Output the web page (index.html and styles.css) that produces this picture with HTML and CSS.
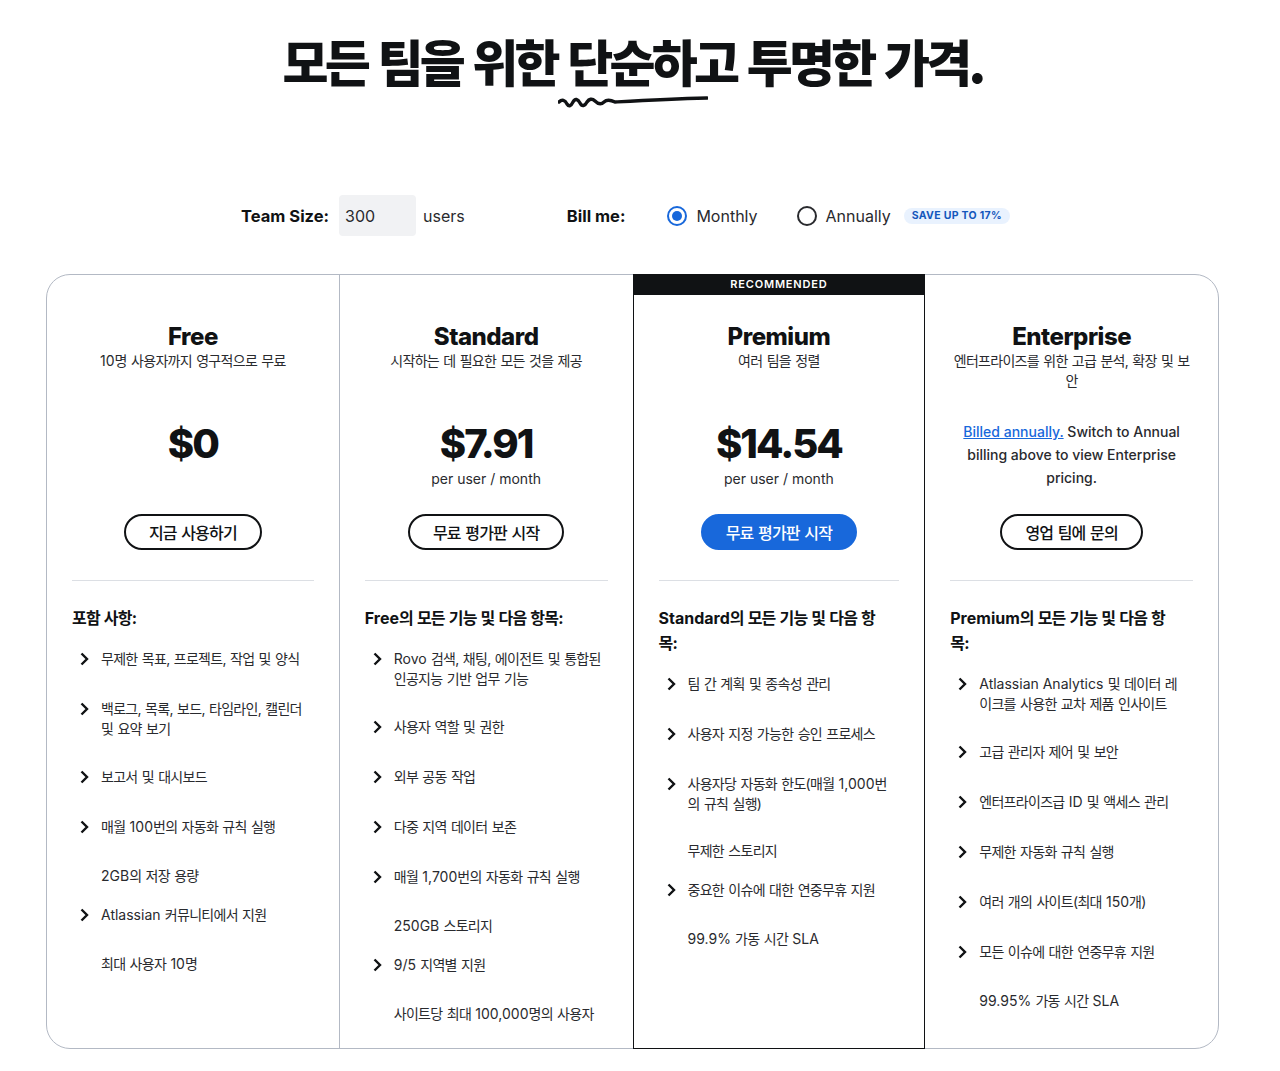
FILE: index.html
```html
<!DOCTYPE html>
<html lang="ko">
<head>
<meta charset="utf-8">
<title>Pricing</title>
<link rel="stylesheet" href="styles.css">
</head>
<body>
<div class="page">
  <header class="hero">
    <h1 class="hero-title">모든 팀을 위한 단순하고 투명한 가격.</h1>
    <div class="squiggle-row">
      <svg class="squiggle" width="150" height="16" viewBox="0 0 150 16" aria-hidden="true">
        <path d="M1 8 C4 5 7 6 9 10 C11 13 13 12 15 8 C17 4 20 5 22 9 C24 13 27 12 29 8 C31 5 34 4 37 7 C40 10 43 11 46 8 C49 5 53 6 57 8 C75 7 110 5 149 4" fill="none" stroke="currentColor" stroke-width="3.4" stroke-linecap="round" stroke-linejoin="round"/>
      </svg>
    </div>
  </header>

  <section class="controls">
    <div class="ctl-group">
      <span class="ctl-label">Team Size:</span>
      <span class="size-input">300</span>
      <span class="ctl-text">users</span>
    </div>
    <div class="ctl-group">
      <span class="ctl-label bill-label">Bill me:</span>
      <span class="radio radio-first"><span class="dot dot-on"></span>Monthly</span>
      <span class="radio"><span class="dot"></span>Annually</span>
      <span class="save">SAVE UP TO 17%</span>
    </div>
  </section>

  <section class="plans">
    <div class="plan plan-free">
      <div class="plan-flag"></div>
      <h2 class="plan-name">Free</h2>
      <p class="plan-desc ko"><span class="en">10</span>명 사용자까지 영구적으로 무료</p>
      <div class="plan-price">
        <div class="price">$0</div>
      </div>
      <span class="plan-btn ko">지금 사용하기</span>
      <hr class="plan-rule">
      <h3 class="feat-head ko">포함 사항:</h3>
      <ul class="feat-list ko">
        <li class="feat arrow"><svg class="chev" viewBox="0 0 24 24"><path d="M9.5 6.5 15 12l-5.5 5.5"/></svg><span class="feat-text">무제한 목표, 프로젝트, 작업 및 양식</span></li>
        <li class="feat arrow"><svg class="chev" viewBox="0 0 24 24"><path d="M9.5 6.5 15 12l-5.5 5.5"/></svg><span class="feat-text">백로그, 목록, 보드, 타임라인, 캘린더<br>및 요약 보기</span></li>
        <li class="feat arrow"><svg class="chev" viewBox="0 0 24 24"><path d="M9.5 6.5 15 12l-5.5 5.5"/></svg><span class="feat-text">보고서 및 대시보드</span></li>
        <li class="feat arrow"><svg class="chev" viewBox="0 0 24 24"><path d="M9.5 6.5 15 12l-5.5 5.5"/></svg><span class="feat-text">매월 <span class="en">100</span>번의 자동화 규칙 실행</span></li>
        <li class="feat"><span></span><span class="feat-text"><span class="en">2GB</span>의 저장 용량</span></li>
        <li class="feat arrow"><svg class="chev" viewBox="0 0 24 24"><path d="M9.5 6.5 15 12l-5.5 5.5"/></svg><span class="feat-text"><span class="en">Atlassian</span> 커뮤니티에서 지원</span></li>
        <li class="feat"><span></span><span class="feat-text">최대 사용자 <span class="en">10</span>명</span></li>
      </ul>
    </div>

    <div class="plan plan-standard">
      <div class="plan-flag"></div>
      <h2 class="plan-name">Standard</h2>
      <p class="plan-desc ko">시작하는 데 필요한 모든 것을 제공</p>
      <div class="plan-price">
        <div class="price">$7.91</div>
        <div class="per">per user / month</div>
      </div>
      <span class="plan-btn ko">무료 평가판 시작</span>
      <hr class="plan-rule">
      <h3 class="feat-head ko"><span class="en">Free</span>의 모든 기능 및 다음 항목:</h3>
      <ul class="feat-list ko">
        <li class="feat arrow"><svg class="chev" viewBox="0 0 24 24"><path d="M9.5 6.5 15 12l-5.5 5.5"/></svg><span class="feat-text"><span class="en">Rovo</span> 검색, 채팅, 에이전트 및 통합된<br>인공지능 기반 업무 기능</span></li>
        <li class="feat arrow"><svg class="chev" viewBox="0 0 24 24"><path d="M9.5 6.5 15 12l-5.5 5.5"/></svg><span class="feat-text">사용자 역할 및 권한</span></li>
        <li class="feat arrow"><svg class="chev" viewBox="0 0 24 24"><path d="M9.5 6.5 15 12l-5.5 5.5"/></svg><span class="feat-text">외부 공동 작업</span></li>
        <li class="feat arrow"><svg class="chev" viewBox="0 0 24 24"><path d="M9.5 6.5 15 12l-5.5 5.5"/></svg><span class="feat-text">다중 지역 데이터 보존</span></li>
        <li class="feat arrow"><svg class="chev" viewBox="0 0 24 24"><path d="M9.5 6.5 15 12l-5.5 5.5"/></svg><span class="feat-text">매월 <span class="en">1,700</span>번의 자동화 규칙 실행</span></li>
        <li class="feat"><span></span><span class="feat-text"><span class="en">250GB</span> 스토리지</span></li>
        <li class="feat arrow"><svg class="chev" viewBox="0 0 24 24"><path d="M9.5 6.5 15 12l-5.5 5.5"/></svg><span class="feat-text"><span class="en">9/5</span> 지역별 지원</span></li>
        <li class="feat"><span></span><span class="feat-text">사이트당 최대 <span class="en">100,000</span>명의 사용자</span></li>
      </ul>
    </div>

    <div class="plan plan-premium">
      <div class="plan-flag flag-on">RECOMMENDED</div>
      <h2 class="plan-name">Premium</h2>
      <p class="plan-desc ko">여러 팀을 정렬</p>
      <div class="plan-price">
        <div class="price">$14.54</div>
        <div class="per">per user / month</div>
      </div>
      <span class="plan-btn plan-btn-primary ko">무료 평가판 시작</span>
      <hr class="plan-rule">
      <h3 class="feat-head ko"><span class="en">Standard</span>의 모든 기능 및 다음 항<br>목:</h3>
      <ul class="feat-list ko">
        <li class="feat arrow"><svg class="chev" viewBox="0 0 24 24"><path d="M9.5 6.5 15 12l-5.5 5.5"/></svg><span class="feat-text">팀 간 계획 및 종속성 관리</span></li>
        <li class="feat arrow"><svg class="chev" viewBox="0 0 24 24"><path d="M9.5 6.5 15 12l-5.5 5.5"/></svg><span class="feat-text">사용자 지정 가능한 승인 프로세스</span></li>
        <li class="feat arrow"><svg class="chev" viewBox="0 0 24 24"><path d="M9.5 6.5 15 12l-5.5 5.5"/></svg><span class="feat-text">사용자당 자동화 한도(매월 <span class="en">1,000</span>번<br>의 규칙 실행)</span></li>
        <li class="feat"><span></span><span class="feat-text">무제한 스토리지</span></li>
        <li class="feat arrow"><svg class="chev" viewBox="0 0 24 24"><path d="M9.5 6.5 15 12l-5.5 5.5"/></svg><span class="feat-text">중요한 이슈에 대한 연중무휴 지원</span></li>
        <li class="feat"><span></span><span class="feat-text"><span class="en">99.9%</span> 가동 시간 <span class="en">SLA</span></span></li>
      </ul>
    </div>

    <div class="plan plan-enterprise">
      <div class="plan-flag"></div>
      <h2 class="plan-name">Enterprise</h2>
      <p class="plan-desc ko">엔터프라이즈를 위한 고급 분석, 확장 및 보<br>안</p>
      <div class="plan-price">
        <p class="ent-note"><a class="ent-link" href="#">Billed annually.</a> Switch to Annual<br>billing above to view Enterprise<br>pricing.</p>
      </div>
      <span class="plan-btn ko">영업 팀에 문의</span>
      <hr class="plan-rule">
      <h3 class="feat-head ko"><span class="en">Premium</span>의 모든 기능 및 다음 항<br>목:</h3>
      <ul class="feat-list ko">
        <li class="feat arrow"><svg class="chev" viewBox="0 0 24 24"><path d="M9.5 6.5 15 12l-5.5 5.5"/></svg><span class="feat-text"><span class="en">Atlassian Analytics</span> 및 데이터 레<br>이크를 사용한 교차 제품 인사이트</span></li>
        <li class="feat arrow"><svg class="chev" viewBox="0 0 24 24"><path d="M9.5 6.5 15 12l-5.5 5.5"/></svg><span class="feat-text">고급 관리자 제어 및 보안</span></li>
        <li class="feat arrow"><svg class="chev" viewBox="0 0 24 24"><path d="M9.5 6.5 15 12l-5.5 5.5"/></svg><span class="feat-text">엔터프라이즈급 <span class="en">ID</span> 및 액세스 관리</span></li>
        <li class="feat arrow"><svg class="chev" viewBox="0 0 24 24"><path d="M9.5 6.5 15 12l-5.5 5.5"/></svg><span class="feat-text">무제한 자동화 규칙 실행</span></li>
        <li class="feat arrow"><svg class="chev" viewBox="0 0 24 24"><path d="M9.5 6.5 15 12l-5.5 5.5"/></svg><span class="feat-text">여러 개의 사이트(최대 <span class="en">150</span>개)</span></li>
        <li class="feat arrow"><svg class="chev" viewBox="0 0 24 24"><path d="M9.5 6.5 15 12l-5.5 5.5"/></svg><span class="feat-text">모든 이슈에 대한 연중무휴 지원</span></li>
        <li class="feat"><span></span><span class="feat-text"><span class="en">99.95%</span> 가동 시간 <span class="en">SLA</span></span></li>
      </ul>
    </div>
  </section>
</div>
</body>
</html>
```

FILE: styles.css
```css
html, body {
  margin: 0;
  padding: 0;
  background: #ffffff;
}

body {
  color: #101214;
  font-family: "Inter", "Noto Sans CJK KR", sans-serif;
}

.page {
  width: 1265px;
  padding-bottom: 23px;
}

/* ---------- hero ---------- */
.hero {
  padding-top: 30px;
  text-align: center;
}

.hero-title {
  margin: 0;
  font-family: "Noto Sans CJK KR", sans-serif;
  font-weight: 900;
  font-size: 50px;
  line-height: 60px;
  letter-spacing: -0.074em;
  color: #101214;
}

.squiggle-row {
  display: flex;
  justify-content: center;
  margin-top: 4px;
  color: #101214;
}

.squiggle {
  display: block;
}

/* ---------- controls ---------- */
.controls {
  display: flex;
  justify-content: center;
  align-items: center;
  gap: 102px;
  margin-top: 85px;
  padding-right: 14px;
  font-size: 16px;
}

.ctl-group {
  display: flex;
  align-items: center;
}

.ctl-label {
  font-weight: 700;
  font-size: 16.5px;
  margin-right: 10px;
}

.bill-label {
  margin-right: 42px;
}

.size-input {
  display: flex;
  align-items: center;
  box-sizing: border-box;
  width: 77px;
  height: 41px;
  padding-left: 6px;
  margin-right: 7px;
  background: #f1f2f4;
  border-radius: 4px;
  color: #292a2e;
}

.ctl-text {
  color: #292a2e;
}

.radio {
  display: flex;
  align-items: center;
  gap: 9px;
  color: #292a2e;
  margin-right: 13px;
}

.radio-first {
  margin-right: 39px;
}

.dot {
  display: flex;
  align-items: center;
  justify-content: center;
  box-sizing: border-box;
  width: 20px;
  height: 20px;
  border: 2px solid #292a2e;
  border-radius: 50%;
}

.dot-on {
  border-color: #1868db;
}

.dot-on::after {
  content: "";
  width: 10px;
  height: 10px;
  border-radius: 50%;
  background: #1868db;
}

.save {
  height: 16px;
  line-height: 16px;
  padding: 0 8px;
  border-radius: 8px;
  background: #e9f2fe;
  color: #1558bc;
  font-size: 10.5px;
  font-weight: 700;
  letter-spacing: 0.3px;
}

/* ---------- plans ---------- */
.plans {
  display: grid;
  grid-template-columns: repeat(4, 1fr);
  box-sizing: border-box;
  width: 1173px;
  margin: 38px auto 0;
  border: 1px solid #b3b9c4;
  border-radius: 24px;
}

.plan {
  display: flex;
  flex-direction: column;
  padding: 0 25px 21px;
  min-width: 0;
}

.plan-free {
  border-right: 1px solid #b3b9c4;
}

.plan-premium {
  margin: -1px 0;
  border: 1px solid #101214;
  border-top: 0;
}

.plan-flag {
  height: 20px;
  margin: 0 -25px;
}

.flag-on {
  height: 21px;
  background: #101214;
  color: #ffffff;
  font-size: 11px;
  line-height: 21px;
  font-weight: 600;
  letter-spacing: 0.8px;
  text-align: center;
}

.plan-name {
  margin: 28px 0 0;
  font-size: 24px;
  line-height: 28px;
  font-weight: 800;
  letter-spacing: -0.5px;
  text-align: center;
}

.plan-desc {
  margin: 0;
  min-height: 40px;
  font-size: 14px;
  line-height: 20px;
  text-align: center;
  color: #292a2e;
  white-space: nowrap;
}

.plan-price {
  height: 70px;
  margin-top: 28px;
  text-align: center;
}

.price {
  font-size: 40px;
  line-height: 50px;
  font-weight: 800;
  letter-spacing: -2px;
}

.per {
  font-size: 14px;
  line-height: 20px;
  color: #292a2e;
}

.ent-note {
  margin: 0;
  padding-top: 1px;
  font-size: 14px;
  line-height: 23px;
  font-weight: 500;
  color: #292a2e;
}

.ent-link {
  color: #1868db;
  text-decoration: underline;
}

.plan-btn {
  align-self: center;
  display: flex;
  align-items: center;
  box-sizing: border-box;
  height: 36px;
  margin-top: 25px;
  padding: 0 23px;
  border: 2px solid #101214;
  border-radius: 18px;
  background: #ffffff;
  color: #101214;
  font-size: 16px;
  font-weight: 500;
  white-space: nowrap;
}

.plan-btn-primary {
  background: #1868db;
  border-color: #1868db;
  color: #ffffff;
}

.plan-rule {
  margin: 30px 0 0;
  border: 0;
  border-top: 1px solid #dcdfe4;
}

.feat-head {
  margin: 25px 0 0;
  font-size: 16px;
  line-height: 25px;
  font-weight: 700;
  white-space: nowrap;
}

.feat-list {
  list-style: none;
  margin: 16px 0 0;
  padding: 0;
  font-size: 14px;
  color: #292a2e;
}

.feat {
  display: grid;
  grid-template-columns: 24px 1fr;
  column-gap: 5px;
  min-height: 24px;
  margin-bottom: 14px;
}

.feat.arrow {
  margin-bottom: 26px;
}

.feat:last-child {
  margin-bottom: 0;
}

.chev {
  display: block;
  width: 24px;
  height: 24px;
  fill: none;
  stroke: #101214;
  stroke-width: 2.4;
}

.feat-text {
  padding-top: 2px;
  line-height: 20px;
  white-space: nowrap;
}

.feat:not(.arrow) .feat-text {
  padding-top: 1px;
}

/* Korean runs are set slightly tighter; Latin runs inside keep normal tracking */
.ko {
  letter-spacing: -0.05em;
  word-spacing: 1px;
}

.en {
  letter-spacing: 0;
  word-spacing: 0;
}
```
